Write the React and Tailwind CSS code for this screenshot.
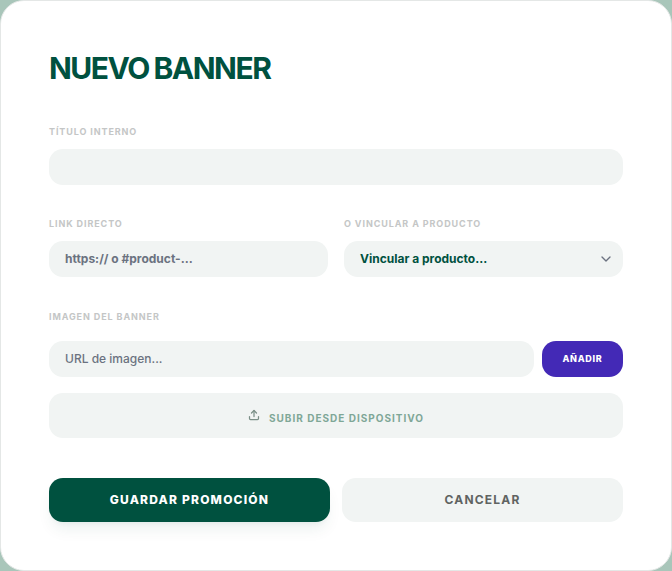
import React from 'react';
import { ChevronDown, Upload } from 'lucide-react';

const Label = ({ children }) => (
  <label className="block text-[9px] leading-[12px] font-bold tracking-[0.1em] text-[#c4c6c6] uppercase">
    {children}
  </label>
);

const App = () => {
  return (
    <div className="h-[571px] w-[672px] bg-[#a9c6ba] font-['Inter',sans-serif]">
      <div className="h-full rounded-[24px] border border-[#e4e7e6] bg-white px-12 pt-[49px]">
        <h1 className="text-[30px] leading-[36px] font-bold tracking-[-0.05em] text-[#00513f] [word-spacing:-1px]">
          NUEVO BANNER
        </h1>

        <div className="mt-10">
          <Label>Título interno</Label>
          <div className="mt-[11px] h-9 rounded-[14px] bg-[#f1f4f3]" />
        </div>

        <div className="mt-[33px] grid grid-cols-2 gap-4">
          <div>
            <Label>Link directo</Label>
            <div className="mt-[11px] flex h-9 items-center rounded-[14px] bg-[#f1f4f3] px-4 text-[12px] font-bold text-[#6b7280]">
              https:// o #product-...
            </div>
          </div>
          <div>
            <Label>O vincular a producto</Label>
            <div className="mt-[11px] flex h-9 items-center justify-between rounded-[14px] bg-[#f1f4f3] pr-[9px] pl-4 text-[12px] font-bold text-[#00513f]">
              <span>Vincular a producto...</span>
              <ChevronDown className="h-4 w-4 text-[#6b7280]" strokeWidth={2} />
            </div>
          </div>
        </div>

        <div className="mt-[34px]">
          <Label>Imagen del banner</Label>
          <div className="mt-[18px] flex gap-2">
            <div className="flex h-9 flex-1 items-center rounded-[14px] bg-[#f1f4f3] px-4 text-[12px] font-medium text-[#6b7280]">
              URL de imagen...
            </div>
            <button className="h-9 w-[81px] rounded-[14px] bg-[#4329b6] text-[9px] font-extrabold tracking-[0.08em] text-white">
              AÑADIR
            </button>
          </div>
          <button className="mt-4 flex h-[45px] w-full items-center justify-center gap-[9px] rounded-[14px] bg-[#f1f4f3] pt-[5px] text-[10px] font-bold tracking-[0.1em] text-[#7fa797]">
            <Upload className="mb-[6px] h-3 w-3 text-[#7b8f87]" strokeWidth={2.5} />
            <span>SUBIR DESDE DISPOSITIVO</span>
          </button>
        </div>

        <div className="mt-10 grid grid-cols-2 gap-3">
          <button className="h-11 rounded-[14px] bg-[#00513f] text-[12px] font-extrabold tracking-[0.1em] text-white shadow-[0_10px_15px_-3px_rgba(0,81,63,0.08),0_4px_6px_-4px_rgba(0,81,63,0.08)]">
            GUARDAR PROMOCIÓN
          </button>
          <button className="h-11 rounded-[14px] bg-[#f1f4f3] text-[12px] font-bold tracking-[0.1em] text-[#5f6361]">
            CANCELAR
          </button>
        </div>
      </div>
    </div>
  );
};

export default App;
